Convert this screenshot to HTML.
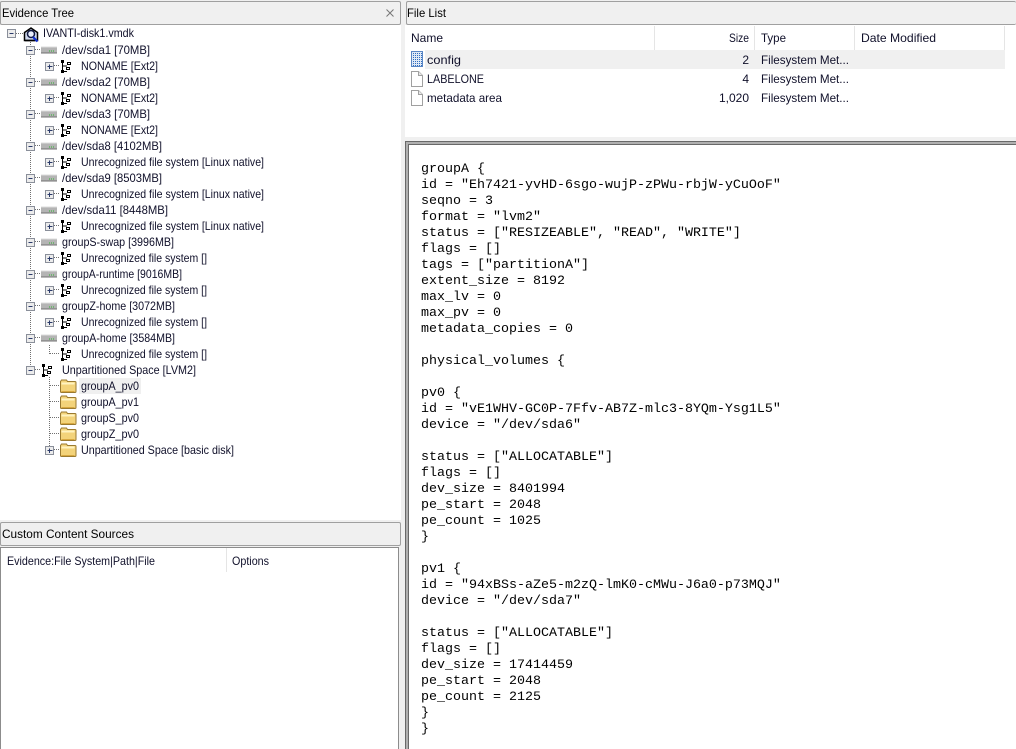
<!DOCTYPE html>
<html><head><meta charset="utf-8"><title>Evidence</title>
<style>
html,body{margin:0;padding:0;background:#f0f0f0;width:1016px;height:749px;overflow:hidden}
div{position:absolute;box-sizing:border-box}
svg{position:absolute;left:0;top:0}
svg text{font-family:"Liberation Sans",sans-serif;font-size:12px;fill:#10102a}
pre{position:absolute;left:421px;top:162px;margin:0;font:13.33px/16px "Liberation Mono",monospace;color:#000}
</style></head><body>
<div style="left:0;top:25px;width:401px;height:495px;background:#fff"></div>
<div style="left:0;top:1px;width:401px;height:24px;background:#f0f0f0;border:1px solid #a0a0a0;border-radius:2px"></div>
<div style="left:406px;top:1px;width:610px;height:24px;background:#f0f0f0;border:1px solid #a0a0a0;border-right:0;border-radius:2px"></div>
<div style="left:405px;top:25px;width:611px;height:112px;background:#fff"></div>
<div style="left:425px;top:50px;width:580px;height:19px;background:#f0f0f0"></div>
<div style="left:79px;top:378px;width:62px;height:16px;background:#f0f0f0"></div>
<div style="left:0;top:522px;width:401px;height:24px;background:#f0f0f0;border:1px solid #a0a0a0;border-radius:2px"></div>
<div style="left:0;top:547px;width:399px;height:202px;background:#fff;border:1px solid #8c8c8c;border-bottom:0"></div>
<div style="left:405px;top:141px;width:611px;height:608px;background:#fff;border-top:1px solid #696969;border-left:1px solid #696969"></div>
<div style="left:406px;top:142px;width:610px;height:607px;background:#fff;border-top:2px solid #b0b0b0;border-left:2px solid #b0b0b0"></div>
<div style="left:408px;top:144px;width:608px;height:605px;background:#fff;border-top:1px solid #696969;border-left:1px solid #696969"></div>
<pre>groupA {
id = "Eh7421-yvHD-6sgo-wujP-zPWu-rbjW-yCuOoF"
seqno = 3
format = "lvm2"
status = ["RESIZEABLE", "READ", "WRITE"]
flags = []
tags = ["partitionA"]
extent_size = 8192
max_lv = 0
max_pv = 0
metadata_copies = 0

physical_volumes {

pv0 {
id = "vE1WHV-GC0P-7Ffv-AB7Z-mlc3-8YQm-Ysg1L5"
device = "/dev/sda6"

status = ["ALLOCATABLE"]
flags = []
dev_size = 8401994
pe_start = 2048
pe_count = 1025
}

pv1 {
id = "94xBSs-aZe5-m2zQ-lmK0-cMWu-J6a0-p73MQJ"
device = "/dev/sda7"

status = ["ALLOCATABLE"]
flags = []
dev_size = 17414459
pe_start = 2048
pe_count = 2125
}
}</pre>
<svg width="1016" height="749" viewBox="0 0 1016 749">
<defs>
<g id="minus"><rect x="-3.5" y="-2.5" width="8" height="8" fill="#ececec" stroke="#8a8f9a"/><path d="M-1.5 1.500h4" stroke="#2a3a6a"/></g>
<g id="plus"><rect x="-3.5" y="-2.5" width="8" height="8" fill="#ececec" stroke="#8a8f9a"/><path d="M-1.5 1.500h5M.5 -.5v4.500" stroke="#2a3a6a"/></g>
<g id="disk"><rect x="0" y="-2" width="16" height="6" fill="#b4b4b4"/><path d="M0 -2.500h16" stroke="#dcdcdc"/><path d="M0 3.500h16" stroke="#707070"/><path d="M8 1.500h6" stroke="#2eb02e" stroke-dasharray="1 1"/></g>
<g id="fs"><path d="M1.500 -4V7M1.500 1H6M1.500 6.500H6" stroke="#000" fill="none"/><rect x="0" y="-5" width="3" height="3" fill="#000"/><rect x="0" y="5" width="3" height="3" fill="#000"/><rect x="6" y="-3" width="4" height="3" fill="#000"/><rect x="5" y="2" width="4" height="3" fill="#000"/><rect x="7" y="-2" width="2" height="1" fill="#fff"/><rect x="6" y="3" width="2" height="1" fill="#fff"/></g>
<g id="folder"><path d="M.5 -4.500l1 -1.500h5l1 1.500h7.500a1 1 0 0 1 1 1V5.500a1 1 0 0 1 -1 1H1.500a1 1 0 0 1 -1 -1z" fill="#f3d37a" stroke="#9a7a30"/><path d="M1.500 -2.500h13" stroke="#fff3c0" stroke-width="2"/><path d="M1.500 5.500h13" stroke="#d8a840"/></g>
</defs>
<g stroke="#707070" stroke-dasharray="1 1" fill="none">
<path d="M30.500 40V370"/><path d="M16 33.500H23"/>
<path d="M49.500 345V354M49.500 377V450"/>
<path d="M35 49.500H41M35 81.500H41M35 113.500H41M35 145.500H41M35 177.500H41M35 209.500H41M35 241.500H41M35 273.500H41M35 305.500H41M35 337.500H41M35 369.500H41"/>
<path d="M54 65.500H60M54 97.500H60M54 129.500H60M54 161.500H60M54 193.500H60M54 225.500H60M54 257.500H60M54 289.500H60M54 321.500H60M50 353.500H60M50 385.500H60M50 401.500H60M50 417.500H60M50 433.500H60M54 449.500H60"/>
</g>
<use href="#minus" x="11" y="32"/>
<!-- root icon -->
<g transform="translate(23,27)" fill="none"><path d="M1.500 5.500L8 1l6.500 4.500v8h-13z" stroke="#000" stroke-width="1.500" fill="#cfd8ee"/><circle cx="8" cy="7" r="3.500" stroke="#101840" stroke-width="1.500" fill="#e8eefc"/><path d="M2 13.500h10" stroke="#000" stroke-width="1.500"/><path d="M10 10l4.500 4.500" stroke="#1030d0" stroke-width="2.200"/></g>
<text x="43" y="37" textLength="91" lengthAdjust="spacingAndGlyphs">IVANTI-disk1.vmdk</text>

<use href="#minus" x="30" y="49"/><use href="#disk" x="41" y="49.500"/><text x="62" y="54" textLength="88" lengthAdjust="spacingAndGlyphs">/dev/sda1 [70MB]</text>
<use href="#plus" x="49" y="65"/><use href="#fs" x="61" y="65"/><text x="81" y="70" textLength="77" lengthAdjust="spacingAndGlyphs">NONAME [Ext2]</text>
<use href="#minus" x="30" y="81"/><use href="#disk" x="41" y="81.500"/><text x="62" y="86" textLength="88" lengthAdjust="spacingAndGlyphs">/dev/sda2 [70MB]</text>
<use href="#plus" x="49" y="97"/><use href="#fs" x="61" y="97"/><text x="81" y="102" textLength="77" lengthAdjust="spacingAndGlyphs">NONAME [Ext2]</text>
<use href="#minus" x="30" y="113"/><use href="#disk" x="41" y="113.500"/><text x="62" y="118" textLength="88" lengthAdjust="spacingAndGlyphs">/dev/sda3 [70MB]</text>
<use href="#plus" x="49" y="129"/><use href="#fs" x="61" y="129"/><text x="81" y="134" textLength="77" lengthAdjust="spacingAndGlyphs">NONAME [Ext2]</text>
<use href="#minus" x="30" y="145"/><use href="#disk" x="41" y="145.500"/><text x="62" y="150" textLength="100" lengthAdjust="spacingAndGlyphs">/dev/sda8 [4102MB]</text>
<use href="#plus" x="49" y="161"/><use href="#fs" x="61" y="161"/><text x="81" y="166" textLength="183" lengthAdjust="spacingAndGlyphs">Unrecognized file system [Linux native]</text>
<use href="#minus" x="30" y="177"/><use href="#disk" x="41" y="177.500"/><text x="62" y="182" textLength="100" lengthAdjust="spacingAndGlyphs">/dev/sda9 [8503MB]</text>
<use href="#plus" x="49" y="193"/><use href="#fs" x="61" y="193"/><text x="81" y="198" textLength="183" lengthAdjust="spacingAndGlyphs">Unrecognized file system [Linux native]</text>
<use href="#minus" x="30" y="209"/><use href="#disk" x="41" y="209.500"/><text x="62" y="214" textLength="106" lengthAdjust="spacingAndGlyphs">/dev/sda11 [8448MB]</text>
<use href="#plus" x="49" y="225"/><use href="#fs" x="61" y="225"/><text x="81" y="230" textLength="183" lengthAdjust="spacingAndGlyphs">Unrecognized file system [Linux native]</text>
<use href="#minus" x="30" y="241"/><use href="#disk" x="41" y="241.500"/><text x="62" y="246" textLength="112" lengthAdjust="spacingAndGlyphs">groupS-swap [3996MB]</text>
<use href="#plus" x="49" y="257"/><use href="#fs" x="61" y="257"/><text x="81" y="262" textLength="126" lengthAdjust="spacingAndGlyphs">Unrecognized file system []</text>
<use href="#minus" x="30" y="273"/><use href="#disk" x="41" y="273.500"/><text x="62" y="278" textLength="120" lengthAdjust="spacingAndGlyphs">groupA-runtime [9016MB]</text>
<use href="#plus" x="49" y="289"/><use href="#fs" x="61" y="289"/><text x="81" y="294" textLength="126" lengthAdjust="spacingAndGlyphs">Unrecognized file system []</text>
<use href="#minus" x="30" y="305"/><use href="#disk" x="41" y="305.500"/><text x="62" y="310" textLength="113" lengthAdjust="spacingAndGlyphs">groupZ-home [3072MB]</text>
<use href="#plus" x="49" y="321"/><use href="#fs" x="61" y="321"/><text x="81" y="326" textLength="126" lengthAdjust="spacingAndGlyphs">Unrecognized file system []</text>
<use href="#minus" x="30" y="337"/><use href="#disk" x="41" y="337.500"/><text x="62" y="342" textLength="113" lengthAdjust="spacingAndGlyphs">groupA-home [3584MB]</text>
<use href="#fs" x="61" y="353"/><text x="81" y="358" textLength="126" lengthAdjust="spacingAndGlyphs">Unrecognized file system []</text>
<use href="#minus" x="30" y="369"/><use href="#fs" x="42" y="369"/><text x="62" y="374" textLength="134" lengthAdjust="spacingAndGlyphs">Unpartitioned Space [LVM2]</text>
<use href="#folder" x="60" y="386"/><text x="81" y="390" textLength="58" lengthAdjust="spacingAndGlyphs">groupA_pv0</text>
<use href="#folder" x="60" y="402"/><text x="81" y="406" textLength="58" lengthAdjust="spacingAndGlyphs">groupA_pv1</text>
<use href="#folder" x="60" y="418"/><text x="81" y="422" textLength="58" lengthAdjust="spacingAndGlyphs">groupS_pv0</text>
<use href="#folder" x="60" y="434"/><text x="81" y="438" textLength="58" lengthAdjust="spacingAndGlyphs">groupZ_pv0</text>
<use href="#plus" x="49" y="449"/><use href="#folder" x="60" y="450"/><text x="81" y="454" textLength="153" lengthAdjust="spacingAndGlyphs">Unpartitioned Space [basic disk]</text>

<!-- headers -->
<text x="2" y="17" textLength="72" lengthAdjust="spacingAndGlyphs" style="fill:#000">Evidence Tree</text>
<path d="M386.500 9.500l7 7M393.500 9.500l-7 7" stroke="#777" fill="none"/>
<text x="407" y="17" textLength="39" lengthAdjust="spacingAndGlyphs" style="fill:#000">File List</text>
<text x="2" y="538" textLength="132" lengthAdjust="spacingAndGlyphs" style="fill:#000">Custom Content Sources</text>
<text x="7" y="565" textLength="148" lengthAdjust="spacingAndGlyphs">Evidence:File System|Path|File</text>
<text x="232" y="565" textLength="37" lengthAdjust="spacingAndGlyphs">Options</text>
<path d="M226.500 548V572" stroke="#e5e5e5"/>

<!-- list header -->
<text x="411" y="42" textLength="32" lengthAdjust="spacingAndGlyphs">Name</text>
<text x="729" y="42" textLength="20" lengthAdjust="spacingAndGlyphs">Size</text>
<text x="761" y="42" textLength="25" lengthAdjust="spacingAndGlyphs">Type</text>
<text x="861" y="42" textLength="75" lengthAdjust="spacingAndGlyphs">Date Modified</text>
<path d="M654.500 26V50M754.500 26V50M854.500 26V50M1004.500 26V50" stroke="#e5e5e5"/>
<!-- list icons -->
<g><rect x="411.500" y="51.500" width="11" height="15" fill="#dfe9f6" stroke="#5a86c4"/><path d="M413 53.500h9M413 55.500h9M413 57.500h9M413 59.500h9M413 61.500h9M413 63.500h9M413 65.500h9" stroke="#2f6cc0" stroke-dasharray="1 1"/></g>
<path d="M411.500 71.500h7l4 4v11h-11z" fill="#fff" stroke="#a0a0a0"/><path d="M418.500 71.500v4h4" fill="#e8e8e8" stroke="#a0a0a0"/>
<path d="M411.500 90.500h7l4 4v11h-11z" fill="#fff" stroke="#a0a0a0"/><path d="M418.500 90.500v4h4" fill="#e8e8e8" stroke="#a0a0a0"/>
<text x="427" y="64" textLength="34" lengthAdjust="spacingAndGlyphs">config</text>
<text x="427" y="83" textLength="57" lengthAdjust="spacingAndGlyphs">LABELONE</text>
<text x="427" y="102" textLength="75" lengthAdjust="spacingAndGlyphs">metadata area</text>
<text x="749" y="64" text-anchor="end">2</text>
<text x="749" y="83" text-anchor="end">4</text>
<text x="749" y="102" text-anchor="end">1,020</text>
<text x="761" y="64" textLength="88" lengthAdjust="spacingAndGlyphs">Filesystem Met...</text>
<text x="761" y="83" textLength="88" lengthAdjust="spacingAndGlyphs">Filesystem Met...</text>
<text x="761" y="102" textLength="88" lengthAdjust="spacingAndGlyphs">Filesystem Met...</text>
</svg>
</body></html>
